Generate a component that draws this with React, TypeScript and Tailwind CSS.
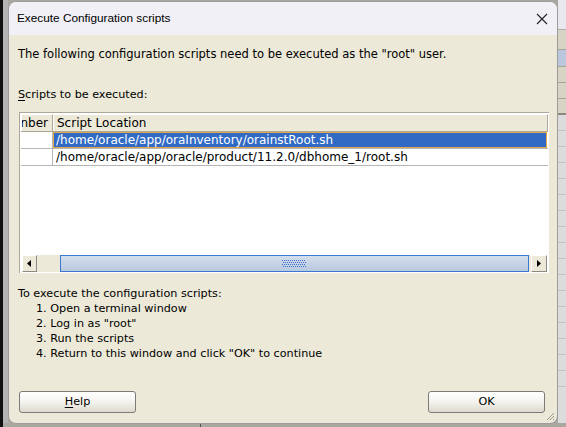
import React from 'react';

const body = { fontFamily: '"DejaVu Sans", Verdana, sans-serif' };

const ArrowLeft = () => (
  <svg width="4" height="7" viewBox="0 0 4 7">
    <path d="M4 0 L0 3.5 L4 7 Z" fill="#000" />
  </svg>
);

const ArrowRight = () => (
  <svg width="4" height="7" viewBox="0 0 4 7">
    <path d="M0 0 L4 3.5 L0 7 Z" fill="#000" />
  </svg>
);

const Grip = () => (
  <svg width="24" height="8" viewBox="0 0 24 8">
    {[0, 1, 2, 3, 4, 5, 6, 7, 8, 9, 10, 11].map((i) =>
      [0, 1, 2, 3].map((j) => (
        <rect key={`${i}-${j}`} x={i * 2 + (j % 2)} y={j * 2} width="1" height="1" fill="#3d6fd1" />
      ))
    )}
  </svg>
);

const Button = ({ children }: { children: React.ReactNode }) => (
  <button
    className="w-[117px] h-[22px] rounded-[3px] border border-[#7b7b78] bg-gradient-to-b from-[#ffffff] via-[#f4f3ee] to-[#dcd9cd] text-[11.2px] text-black flex items-center justify-center"
    style={body}
  >
    {children}
  </button>
);

export default function App() {
  const rows = [
    '/home/oracle/app/oraInventory/orainstRoot.sh',
    '/home/oracle/app/oracle/product/11.2.0/dbhome_1/root.sh',
  ];

  return (
    <div className="w-[566px] h-[427px] flex flex-col bg-[#a9a7a0] overflow-hidden">
      <div className="flex h-[423px]">
        {/* desktop behind, left */}
        <div className="w-[8px] flex">
          <div className="w-[3px] bg-[#111]" />
          <div className="flex-1 bg-[#b4b4b4]" />
        </div>

        {/* dialog */}
        <div className="w-[550px] h-[423px] mt-[1px] rounded-[8px] border border-[#9c9c9c] overflow-hidden flex flex-col bg-[#ece9d8] relative">
          <div className="h-[33px] bg-[#f0f0f6] flex items-center justify-between pl-[8px] pr-[9px]">
            <span className="text-[11.8px] text-black" style={{ fontFamily: '"Liberation Sans", Arial, sans-serif' }}>
              Execute Configuration scripts
            </span>
            <svg width="12" height="12" viewBox="0 0 12 12">
              <path d="M1 1 L11 11 M11 1 L1 11" stroke="#222" strokeWidth="1.1" />
            </svg>
          </div>

          <div className="flex-1 flex flex-col pl-[9px] pr-[10px] text-[11.2px] text-black" style={body}>
            <div className="mt-[12px] leading-[14px] text-[11.5px]">
              The following configuration scripts need to be executed as the "root" user.
            </div>
            <div className="mt-[27px] leading-[14px]">
              <span className="underline underline-offset-2">S</span>cripts to be executed:
            </div>

            {/* table */}
            <div className="mt-[10px] ml-[1px] w-[530px] h-[161px] border-t border-l border-[#aca899] bg-white flex flex-col p-[1px] pb-0 text-[12px]">
              <div className="h-[18px] flex border-b border-[#aca899] bg-[#ece9d8]">
                <div className="w-[32px] h-full border-r border-[#aca899] border-t border-t-white border-l border-l-white flex items-center justify-end pr-[4px] overflow-hidden">
                  nber
                </div>
                <div className="flex-1 h-full border-r border-[#aca899] border-t border-t-white border-l border-l-white flex items-center pl-[3px]">
                  Script Location
                </div>
              </div>
              {rows.map((r, i) => (
                <div key={r} className="h-[17px] flex border-b border-[#b5b5b5]">
                  <div className="w-[32px] border-r border-[#b5b5b5]" />
                  <div
                    className={
                      i === 0
                        ? 'flex-1 bg-[#316ac5] text-white border border-[#e8a64a] flex items-center pl-[2px] mr-[1px]'
                        : 'flex-1 flex items-center pl-[3px]'
                    }
                  >
                    {r}
                  </div>
                </div>
              ))}
              <div className="flex-1" />

              {/* horizontal scrollbar */}
              <div className="h-[17px] mb-[1px] flex items-stretch ml-[1px] mr-[1px]">
                <div className="w-[15px] border border-[#8a8a86] border-t-white border-l-white bg-[#ece9d8] flex items-center justify-center">
                  <ArrowLeft />
                </div>
                <div className="w-[23px] bg-[#ece9d8]" />
                <div className="w-[470px] border border-[#3b78d4] bg-gradient-to-b from-[#d4deec] to-[#b9c9df] flex items-center justify-center">
                  <Grip />
                </div>
                <div className="w-[2px] bg-[#ece9d8]" />
                <div className="w-[16px] border border-[#8a8a86] border-t-white border-l-white bg-[#ece9d8] flex items-center justify-center">
                  <ArrowRight />
                </div>
              </div>
            </div>

            <div className="mt-[13px] leading-[15px]">
              <div>To execute the configuration scripts:</div>
              <div className="pl-[18px]">
                <div>1. Open a terminal window</div>
                <div>2. Log in as "root"</div>
                <div>3. Run the scripts</div>
                <div>4. Return to this window and click "OK" to continue</div>
              </div>
            </div>

            <div className="mt-auto mb-[10px] flex justify-between pl-[1px] pr-[2px]">
              <Button>
                <span className="underline underline-offset-2">H</span>elp
              </Button>
              <Button>OK</Button>
            </div>
          </div>

          <svg className="absolute right-[2px] bottom-[2px]" width="10" height="10" viewBox="0 0 10 10">
            <path d="M9 2 L2 9 M9 5 L5 9 M9 8 L8 9" stroke="#9a988e" strokeWidth="1" />
          </svg>
        </div>

        {/* desktop behind, right */}
        <div className="flex-1 flex flex-col bg-[#dcdcdc]">
          <div className="h-[30px] bg-[#e8e8ee] border-b border-[#b0b0b0]" />
          <div className="h-[20px] bg-[#d8d4c4] border-b border-[#a8a494]" />
          <div className="h-[17px] bg-[#b9c8dc] border-b border-[#a8a494]" />
          <div className="h-[16px] bg-[#d8d4c4] border-b border-[#a8a494]" />
          <div className="h-[16px] bg-[#d8d4c4] border-b border-[#a8a494]" />
          <div className="h-[16px] bg-[#d8d4c4] border-b-2 border-[#8c8a80]" />
          {[0, 1, 2, 3, 4, 5, 6, 7, 8, 9, 10, 11, 12, 13, 14, 15, 16].map((i) => (
            <div key={i} className="h-[16px] border-b border-[#c4c4c4]" />
          ))}
        </div>
      </div>
      <div className="flex-1 flex">
        <div className="w-[3px] bg-[#111]" />
        <div className="w-[198px] border-r border-[#555]" />
      </div>
    </div>
  );
}
